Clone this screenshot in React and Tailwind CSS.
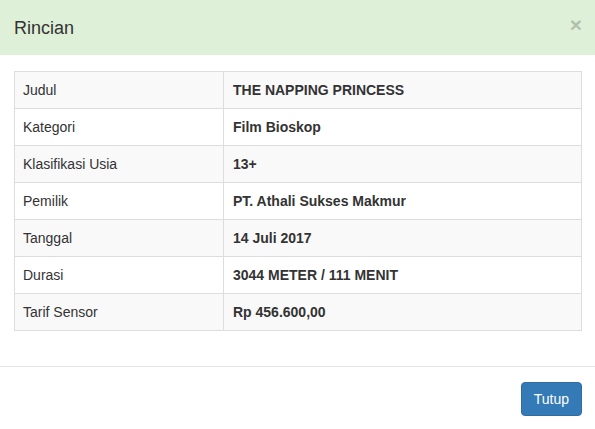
export default function App() {
  const rows = [
    ["Judul", "THE NAPPING PRINCESS"],
    ["Kategori", "Film Bioskop"],
    ["Klasifikasi Usia", "13+"],
    ["Pemilik", "PT. Athali Sukses Makmur"],
    ["Tanggal", "14 Juli 2017"],
    ["Durasi", "3044 METER / 111 MENIT"],
    ["Tarif Sensor", "Rp 456.600,00"],
  ];
  return (
    <div className="w-[595px] h-[429px] overflow-hidden bg-white text-[#333] text-[14px] leading-[20px]" style={{ fontFamily: '"Liberation Sans", Arial, sans-serif' }}>
      <div className="h-[55px] bg-[#dff0d8] flex items-center justify-between pl-[14px] pr-[13px]">
        <h4 className="text-[18px] leading-[26px] text-[#333] m-0">Rincian</h4>
        <button className="text-[21px] leading-none font-bold text-black opacity-20 -mt-[6px]">×</button>
      </div>
      <div className="pt-[16px] pl-[14px] pr-[13px] pb-[15px]">
        <table className="w-full border-collapse border border-[#ddd] mb-[20px]">
          <tbody>
            {rows.map(([k, v], i) => (
              <tr key={k} className={i % 2 === 0 ? "bg-[#f9f9f9]" : "bg-white"}>
                <td className="w-[209px] border border-[#ddd] px-[8px] py-[8px] h-[37px]">{k}</td>
                <td className="border border-[#ddd] px-[9px] py-[8px] font-bold">{v}</td>
              </tr>
            ))}
          </tbody>
        </table>
      </div>
      <div className="border-t border-[#e5e5e5] pt-[15px] pl-[14px] pr-[13px] flex justify-end">
        <button className="h-[34px] px-[12px] rounded-[4px] bg-[#337ab7] border border-[#2e6da4] text-white text-[14px]">Tutup</button>
      </div>
    </div>
  );
}
